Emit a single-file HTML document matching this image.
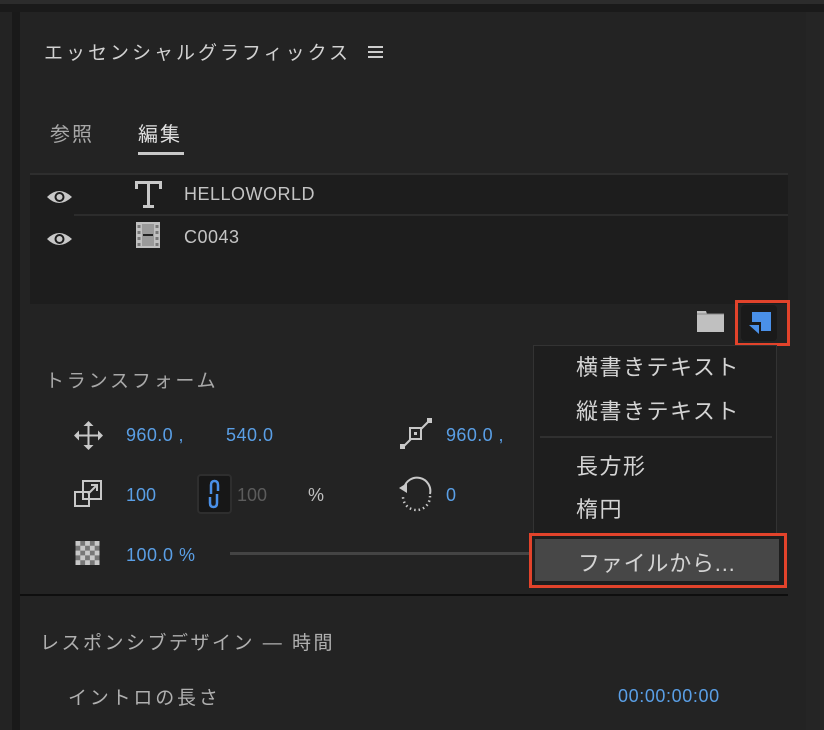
<!DOCTYPE html>
<html><head><meta charset="utf-8"><style>
*{margin:0;padding:0;box-sizing:border-box}
body{width:824px;height:730px;background:#232323;position:relative;overflow:hidden;font-family:"Liberation Sans","Noto Sans CJK JP",sans-serif;color:#c8c8c8}
.a{position:absolute;white-space:nowrap}
.b{color:#5a9fe6}
</style></head><body>
<div class="a" style="left:0;top:0;width:824px;height:4px;background:#2c2c2c"></div>
<div class="a" style="left:0;top:4px;width:824px;height:8px;background:#1a1a1a"></div>
<div class="a" style="left:12px;top:12px;width:8px;height:718px;background:#191919"></div>
<div class="a" style="left:806px;top:12px;width:18px;height:718px;background:#252525"></div>
<div class="a" style="left:44px;top:38px;font-size:19px;color:#d2d2d2;letter-spacing:3px">エッセンシャルグラフィックス</div>
<div class="a" style="left:368px;top:46px;width:15px;height:12px;border-top:2px solid #ccc;border-bottom:2px solid #ccc"></div>
<div class="a" style="left:368px;top:51px;width:15px;height:2px;background:#ccc"></div>
<div class="a" style="left:50px;top:118px;font-size:20px;color:#a8a8a8;letter-spacing:2px">参照</div>
<div class="a" style="left:138px;top:118px;font-size:20px;color:#e0e0e0;letter-spacing:2px">編集</div>
<div class="a" style="left:138px;top:152px;width:46px;height:3px;background:#c8c8c8"></div>
<div class="a" style="left:30px;top:173px;width:758px;height:131px;background:#1d1d1d;border-top:2px solid #2e2e2e"></div>
<div class="a" style="left:74px;top:214px;width:714px;height:2px;background:#2c2c2c"></div>
<svg class="a" style="left:46px;top:188px" width="27" height="18" viewBox="0 0 27 18"><path d="M1 9Q13 -3 26 9Q13 21 1 9Z" fill="#c8c8c8"/><circle cx="13.5" cy="9" r="5" fill="#1d1d1d"/><circle cx="13.5" cy="9" r="3" fill="#c8c8c8"/></svg>
<svg class="a" style="left:46px;top:230px" width="27" height="18" viewBox="0 0 27 18"><path d="M1 9Q13 -3 26 9Q13 21 1 9Z" fill="#c8c8c8"/><circle cx="13.5" cy="9" r="5" fill="#1d1d1d"/><circle cx="13.5" cy="9" r="3" fill="#c8c8c8"/></svg>
<svg class="a" style="left:134px;top:180px" width="29" height="29" viewBox="0 0 29 29"><path d="M1 1H28V9H25V4H16V25H20V28H9V25H13V4H4V9H1Z" fill="#c8c8c8"/></svg>
<svg class="a" style="left:136px;top:222px" width="24" height="26" viewBox="0 0 24 26"><path d="M0 0H24V26H0Z" fill="#c0c0c0"/><path d="M6 2H18V24H6Z" fill="#9a9a9a"/><path d="M7 12H17V14H7Z" fill="#222"/><path d="M1.5 3h3v3h-3zM1.5 9h3v3h-3zM1.5 15h3v3h-3zM1.5 21h3v3h-3zM19.5 3h3v3h-3zM19.5 9h3v3h-3zM19.5 15h3v3h-3zM19.5 21h3v3h-3z" fill="#777"/></svg>
<div class="a" style="left:184px;top:184px;font-size:18px;color:#c4c4c4;letter-spacing:0.5px">HELLOWORLD</div>
<div class="a" style="left:184px;top:227px;font-size:18px;color:#c4c4c4;letter-spacing:0.5px">C0043</div>
<svg class="a" style="left:697px;top:311px" width="27" height="21" viewBox="0 0 27 21"><path d="M0 0H9L10 3H27V21H0Z" fill="#c0c0c0"/><path d="M0 3H27" stroke="#888" stroke-width="1"/></svg>
<div class="a" style="left:735px;top:300px;width:55px;height:46px;border:3px solid #e2432b"></div>
<div class="a" style="left:741px;top:305px;width:36px;height:36px;background:#1a1a1a;border-radius:4px"></div>
<svg class="a" style="left:749px;top:312px" width="22" height="22" viewBox="0 0 22 22"><path d="M3 0H22V19H12V10H3Z" fill="#4a90e8"/><path d="M0 13H10V22Z" fill="#4a90e8"/></svg>
<div class="a" style="left:45px;top:366px;font-size:19px;color:#a8a8a8;letter-spacing:2.8px">トランスフォーム</div>
<svg class="a" style="left:74px;top:421px" width="29" height="29" viewBox="0 0 29 29" fill="#c8c8c8"><path d="M13.5 4h2v21h-2zM4 13.5h21v2H4z"/><path d="M14.5 0l5 5h-10zM14.5 29l5-5h-10zM0 14.5l5-5v10zM29 14.5l-5-5v10z"/></svg>
<div class="a b" style="left:126px;top:425px;font-size:18px;letter-spacing:0.4px">960.0 ,</div>
<div class="a b" style="left:226px;top:425px;font-size:18px;letter-spacing:0.5px">540.0</div>
<svg class="a" style="left:400px;top:418px" width="32" height="32" viewBox="0 0 32 32"><path d="M3 29L29 3" stroke="#c8c8c8" stroke-width="2"/><rect x="10" y="10" width="11" height="11" fill="#232323" stroke="#c8c8c8" stroke-width="2"/><rect x="14" y="14" width="3" height="3" fill="#c8c8c8"/><rect x="0" y="26" width="5" height="5" fill="#c8c8c8"/><rect x="27" y="0" width="5" height="5" fill="#c8c8c8"/></svg>
<div class="a b" style="left:446px;top:425px;font-size:18px;letter-spacing:0.4px">960.0 ,</div>
<svg class="a" style="left:74px;top:480px" width="29" height="28" viewBox="0 0 29 28" fill="none" stroke="#c8c8c8" stroke-width="2"><rect x="1" y="12" width="14" height="14"/><rect x="9" y="1" width="18" height="18"/><path d="M14 14l9-9M17 5h6v6"/></svg>
<div class="a b" style="left:126px;top:485px;font-size:18px">100</div>
<div class="a" style="left:197px;top:474px;width:35px;height:40px;background:#171717;border:2px solid #2e2e2e;border-radius:4px"></div>
<svg class="a" style="left:205px;top:479px" width="18" height="30" viewBox="0 0 18 30" fill="none" stroke="#4a90e8" stroke-width="2.5"><path d="M6 15V6Q6 2 9.5 2Q13 2 13 6V12"/><path d="M12 15V24Q12 28 8.5 28Q5 28 5 24V18"/></svg>
<div class="a" style="left:237px;top:485px;font-size:18px;color:#5c5c5c">100</div>
<div class="a" style="left:308px;top:485px;font-size:18px;color:#c0c0c0">%</div>
<svg class="a" style="left:398px;top:476px" width="36" height="36" viewBox="0 0 36 36" fill="none" stroke="#c8c8c8"><path d="M6 12A13 13 0 0 1 32 18" stroke-width="2"/><path d="M1 12l8-5v10z" fill="#c8c8c8" stroke="none"/><path d="M32 20A13 13 0 0 1 5 21" stroke-width="2.5" stroke-dasharray="1.5 3"/></svg>
<div class="a b" style="left:446px;top:485px;font-size:18px">0</div>
<svg class="a" style="left:75px;top:541px" width="25" height="24" viewBox="0 0 5 5"><rect width="5" height="5" fill="#777"/><path d="M0 0h1v1H0zM2 0h1v1H2zM4 0h1v1H4zM1 1h1v1H1zM3 1h1v1H3zM0 2h1v1H0zM2 2h1v1H2zM4 2h1v1H4zM1 3h1v1H1zM3 3h1v1H3zM0 4h1v1H0zM2 4h1v1H2zM4 4h1v1H4z" fill="#c8c8c8"/></svg>
<div class="a b" style="left:126px;top:545px;font-size:18px;letter-spacing:0.5px">100.0 %</div>
<div class="a" style="left:230px;top:552px;width:300px;height:3px;background:#444"></div>
<div class="a" style="left:533px;top:345px;width:244px;height:240px;background:#1e1e1e;border:1px solid #333"></div>
<div class="a" style="left:576px;top:350px;font-size:22px;color:#d4d4d4;letter-spacing:1.5px">横書きテキスト</div>
<div class="a" style="left:576px;top:394px;font-size:22px;color:#d4d4d4;letter-spacing:1.5px">縦書きテキスト</div>
<div class="a" style="left:540px;top:436px;width:232px;height:2px;background:#303030"></div>
<div class="a" style="left:576px;top:449px;font-size:22px;color:#d4d4d4;letter-spacing:1.5px">長方形</div>
<div class="a" style="left:576px;top:492px;font-size:22px;color:#d4d4d4;letter-spacing:1.5px">楕円</div>
<div class="a" style="left:529px;top:533px;width:258px;height:55px;border:3px solid #e2432b;background:#1e1e1e"></div>
<div class="a" style="left:535px;top:539px;width:244px;height:42px;background:#474747"></div>
<div class="a" style="left:578px;top:546px;font-size:22px;color:#d4d4d4;letter-spacing:0.8px">ファイルから...</div>
<div class="a" style="left:20px;top:594px;width:768px;height:2px;background:#0e0e0e"></div>
<div class="a" style="left:40px;top:628px;font-size:19px;color:#b0b0b0;letter-spacing:2.5px">レスポンシブデザイン — 時間</div>
<div class="a" style="left:68px;top:683px;font-size:19px;color:#b0b0b0;letter-spacing:2.8px">イントロの長さ</div>
<div class="a b" style="left:618px;top:686px;font-size:18px;letter-spacing:0.6px">00:00:00:00</div>
</body></html>
